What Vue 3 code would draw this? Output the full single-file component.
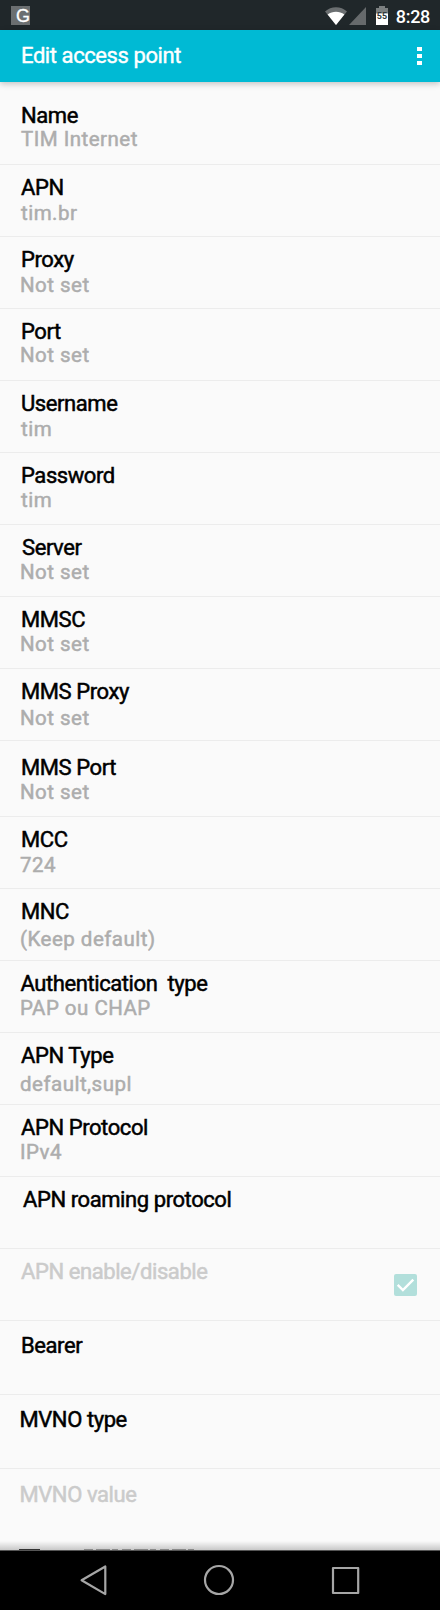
<template>
  <div class="screen">
    <header class="status-bar">
      <span class="status-badge">G</span>
      <div class="status-icons">
        <svg class="wifi" width="22" height="18" viewBox="0 0 22 18">
          <path d="M0 4.6C6-1.2 16-1.2 22 4.6L11 18z" fill="#6b6f71" />
          <path d="M2.6 7.4C7.5 3.9 14.5 3.9 19.4 7.4L11 18z" fill="#fff" />
        </svg>
        <svg class="signal" width="17" height="18" viewBox="0 0 17 18">
          <path d="M17 0v18H0z" fill="#666a6c" />
        </svg>
        <svg class="battery" width="12" height="19" viewBox="0 0 12 19">
          <path d="M3 0h6v2h3v6H0V2h3z" fill="#7b7f80" />
          <path d="M0 7.5h12V19H0z" fill="#fff" />
          <text x="6" y="12.8" text-anchor="middle">55</text>
        </svg>
        <span class="clock">8:28</span>
      </div>
    </header>

    <div class="app-bar">
      <h1>Edit access point</h1>
      <button class="menu" aria-label="More options">
        <i></i><i></i><i></i>
      </button>
    </div>

    <ul class="list">
      <li
        v-for="row in rows"
        :key="row.title"
        class="row"
        :class="{ disabled: row.disabled }"
        :style="{ height: row.height + 'px', paddingTop: row.top + 'px' }"
      >
        <div class="text">
          <p class="title" :style="{ marginLeft: (row.indent || 0) + 'px' }">{{ row.title }}</p>
          <p v-if="row.value" class="value" :style="{ marginTop: row.gap + 'px', marginLeft: (row.valueIndent || 0) + 'px' }">{{ row.value }}</p>
        </div>
        <span v-if="row.checkbox" class="checkbox">
          <svg width="23" height="22" viewBox="0 0 23 22">
            <path d="M3.7 10.8l5.2 5.2L19.3 5.6" fill="none" stroke="#fff" stroke-width="2.4" />
          </svg>
        </span>
      </li>
    </ul>

    <div class="list-edge">
      <svg width="440" height="1" viewBox="0 0 440 1">
        <path d="M19 .5h21" stroke="#333" />
        <path d="M84 .5h111" stroke="#8a8a8a" stroke-dasharray="9 3 14 2 6 4" />
      </svg>
    </div>

    <nav class="nav-bar">
      <svg width="440" height="59" viewBox="0 0 440 59" fill="none" stroke="#a6a6a6" stroke-width="2.2" stroke-linejoin="round">
        <path d="M105.3 15.5v27.6L81.6 29.3z" />
        <circle cx="219" cy="29" r="14" />
        <path d="M333 17h25.2v25H333z" />
      </svg>
    </nav>
  </div>
</template>

<script setup>
import { ref } from 'vue';

// top: space above the title, gap: space between title and value
const rows = ref([
  { title: 'Name', value: 'TIM Internet', height: 83, top: 22, gap: 0, valueIndent: 1 },
  { title: 'APN', value: 'tim.br', height: 72, top: 11, gap: 2, valueIndent: 1 },
  { title: 'Proxy', value: 'Not set', height: 72, top: 11, gap: 2 },
  { title: 'Port', value: 'Not set', height: 72, top: 11, gap: 0 },
  { title: 'Username', value: 'tim', height: 72, top: 11, gap: 2, valueIndent: 1 },
  { title: 'Password', value: 'tim', height: 72, top: 11, gap: 1, valueIndent: 1 },
  { title: 'Server', value: 'Not set', height: 72, top: 11, gap: 1, indent: 1 },
  { title: 'MMSC', value: 'Not set', height: 72, top: 11, gap: 1 },
  { title: 'MMS Proxy', value: 'Not set', height: 72, top: 11, gap: 3 },
  { title: 'MMS Port', value: 'Not set', height: 76, top: 15, gap: 1 },
  { title: 'MCC', value: '724', height: 72, top: 11, gap: 2 },
  { title: 'MNC', value: '(Keep default)', height: 72, top: 11, gap: 4 },
  { title: 'Authentication  type', value: 'PAP ou CHAP', height: 72, top: 11, gap: 1, indent: -.5 },
  { title: 'APN Type', value: 'default,supl', height: 72, top: 11, gap: 5 },
  { title: 'APN Protocol', value: 'IPv4', height: 72, top: 11, gap: 1 },
  { title: 'APN roaming protocol', height: 72, top: 11, indent: 2 },
  { title: 'APN enable/disable', height: 72, top: 11, disabled: true, checkbox: true },
  { title: 'Bearer', height: 74, top: 13 },
  { title: 'MVNO type', height: 74, top: 13, indent: -1.5 },
  { title: 'MVNO value', height: 80, top: 14, indent: -1.5, disabled: true },
]);
</script>

<style>
body {
  margin: 0;
}
</style>

<style scoped>
.screen {
  display: flex;
  flex-direction: column;
  width: 440px;
  height: 1610px;
  overflow: hidden;
  background-color: #fafafa;
  font-family: Roboto, sans-serif;
}

.status-bar {
  display: flex;
  align-items: flex-start;
  justify-content: space-between;
  flex: none;
  box-sizing: border-box;
  height: 30px;
  padding: 6px 10px 0 11px;
  background-color: #20272a;
  color: #fff;
}

.status-badge {
  box-sizing: border-box;
  width: 19px;
  height: 19px;
  padding-left: 5px;
  background-color: #6b6f71;
  font: 500 18px/21px "Liberation Sans", sans-serif;
  -webkit-text-stroke: .3px #fff;
}

.status-icons {
  display: flex;
  align-items: flex-start;
}

.wifi {
  margin: 1px 2px 0 0;
}

.signal {
  margin: 1px 10px 0 0;
}

.battery {
  margin-right: 8px;
}

.battery text {
  fill: #30383a;
  font-size: 9px;
  font-weight: 700;
}

.clock {
  font-size: 18px;
  font-weight: 500;
  line-height: 21px;
  letter-spacing: -.3px;
}

.app-bar {
  display: flex;
  align-items: center;
  justify-content: space-between;
  position: relative;
  flex: none;
  box-sizing: border-box;
  height: 52px;
  padding: 0 14px 0 20px;
  background-color: #00bad4;
  box-shadow: 0 2px 6px rgba(0, 0, 0, .22);
}

.app-bar h1 {
  margin: 0 0 1px 1px;
  color: #fff;
  font-size: 22px;
  font-weight: 400;
  line-height: 26px;
  letter-spacing: -.42px;
  -webkit-text-stroke: .4px #fff;
}

.menu {
  display: flex;
  flex-direction: column;
  align-items: flex-end;
  gap: 3px;
  width: 20px;
  margin: 0 4px 1px 0;
  padding: 0;
  border: 0;
  background: none;
}

.menu i {
  width: 5px;
  height: 4px;
  background-color: #fff;
}

.list {
  flex: none;
  margin: 0;
  padding: 0;
  list-style-type: none;
}

.row {
  display: flex;
  justify-content: space-between;
  box-sizing: border-box;
  padding: 0 23px 0 20px;
  border-bottom: 1px solid #ececec;
}

.row:last-child {
  border-bottom: 0;
}

.title,
.value {
  margin: 0;
  white-space: pre;
}

.title {
  padding-left: 1px;
  color: #000;
  font-size: 22px;
  font-weight: 400;
  line-height: 24px;
  letter-spacing: -.42px;
  -webkit-text-stroke: .5px currentColor;
}

.value {
  color: #adadad;
  font-size: 20.5px;
  font-weight: 400;
  line-height: 22px;
  letter-spacing: .48px;
  -webkit-text-stroke: .5px currentColor;
}

.disabled .title {
  color: #cbcbcb;
}

.checkbox {
  width: 23px;
  height: 22px;
  margin-top: 14px;
  border-radius: 2px;
  background-color: #b2dfdb;
}

.checkbox svg {
  display: block;
}

.list-edge {
  display: flex;
  align-items: flex-end;
  flex: 1;
  margin-top: -8px;
  border-bottom: 1px solid #555;
  background: linear-gradient(rgba(0, 0, 0, 0), rgba(0, 0, 0, .2));
}

.nav-bar {
  flex: none;
  height: 59px;
  background-color: #000;
}

.nav-bar svg {
  display: block;
}
</style>
